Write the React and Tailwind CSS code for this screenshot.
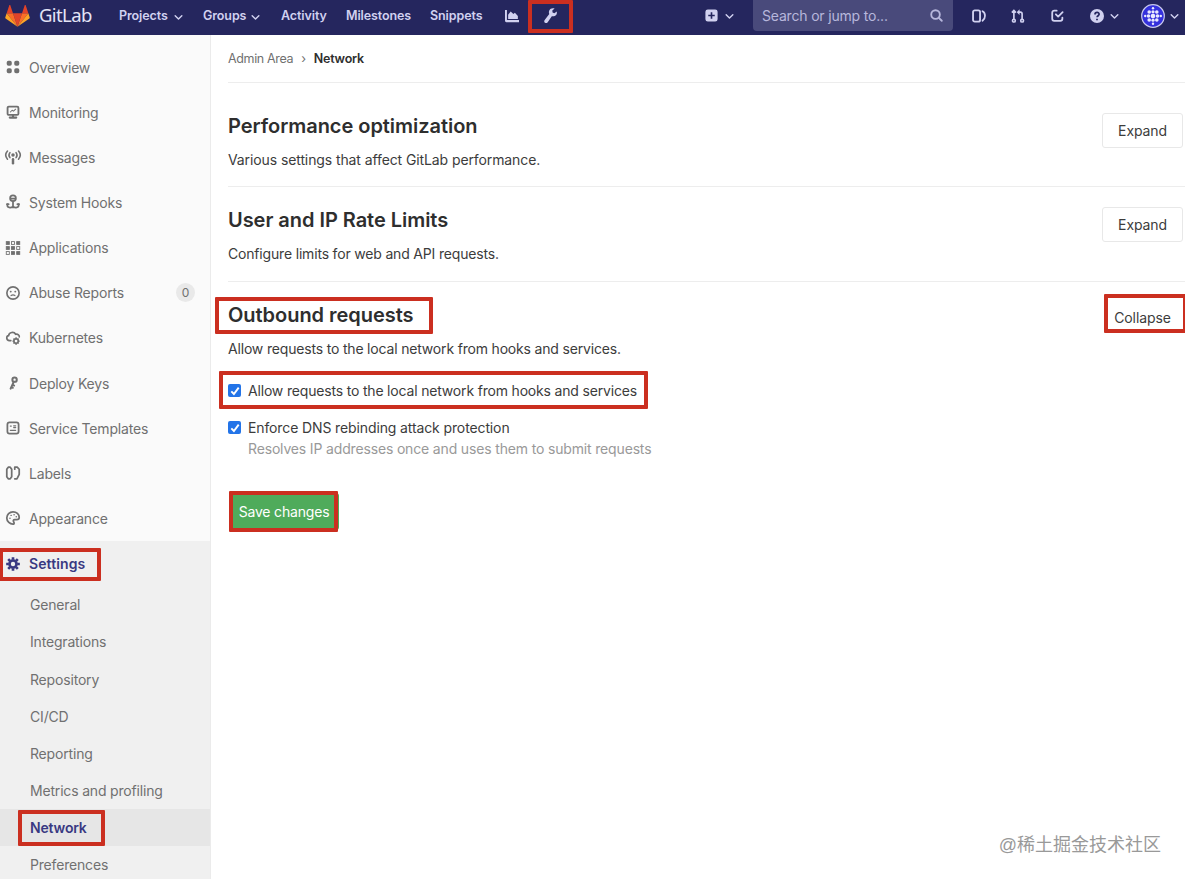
import React, { useState } from "react";
import clsx from "clsx";

const ICONS = {
    overview: (
        <g fill="none" stroke="currentColor" strokeWidth="2.8">
            <rect x="2.2" y="2.3" width="3" height="3" rx="0.6" />
            <rect x="10.8" y="2.3" width="3" height="3" rx="0.6" />
            <rect x="2.2" y="10.7" width="3" height="3" rx="0.6" />
            <rect x="10.8" y="10.7" width="3" height="3" rx="0.6" />
        </g>
    ),
    monitor: (
        <g fill="none" stroke="currentColor" strokeWidth="2.1" strokeLinecap="round" strokeLinejoin="round">
            <rect x="1.8" y="1.9" width="12.4" height="9.4" rx="1.4" />
            <path d="M4.3 14.4h7.4M8 12v2" strokeWidth="2.4" />
            <path d="M5 8l2-2 1.6 1L11 4.8" strokeWidth="1.2" />
        </g>
    ),
    messages: (
        <g fill="none" stroke="currentColor" strokeWidth="1.8" strokeLinecap="round">
            <path d="M1.7 1.2C-.8 4-.8 7.7 1.7 10.5M14.3 1.2c2.5 2.8 2.5 6.5 0 9.3M4.5 3c-1.4 1.8-1.4 3.9 0 5.700M11.500 3c1.400 1.800 1.400 3.900 0 5.700" />
            <circle cx="8" cy="5.8" r="1.1" fill="currentColor" />
            <path d="M8 10.6v4.5" strokeWidth="2.8" />
        </g>
    ),
    hook: (
        <g fill="none" stroke="currentColor" strokeWidth="2" strokeLinecap="round" strokeLinejoin="round">
            <circle cx="8" cy="3.8" r="3.3" />
            <path d="M5.5 4h5M8 7.5V14M1.5 10v1.5c0 3.7 5.5 3.7 6.5 1 1 2.7 6.5 2.7 6.5-1V10M1 10.5h2M13 10.5h2" />
        </g>
    ),
    applications: (
        <g fill="currentColor" stroke="currentColor" strokeWidth="1">
            <rect x="0.3" y="0.7" width="3.5" height="3.2" />
            <rect x="6.3" y="0.7" width="3.4" height="3.2" fill="none" />
            <rect x="12.2" y="0.7" width="3.5" height="3.2" />
            <rect x="0.3" y="6.4" width="3.5" height="3.2" />
            <rect x="6.3" y="6.4" width="3.4" height="3.2" />
            <rect x="12.2" y="6.4" width="3.5" height="3.2" fill="none" />
            <rect x="0.3" y="12.1" width="3.5" height="3.2" fill="none" />
            <rect x="6.3" y="12.1" width="3.4" height="3.2" />
            <rect x="12.2" y="12.1" width="3.5" height="3.2" />
        </g>
    ),
    abuse: (
        <g fill="none" stroke="currentColor" strokeWidth="1.9" strokeLinecap="round">
            <circle cx="8" cy="8" r="7" />
            <path d="M5.3 6.3h.2M10.5 6.3h.2" strokeWidth="2" />
            <path d="M5.8 10.9c1.3-1 3.1-1 4.4 0" strokeWidth="1.3" />
        </g>
    ),
    kubernetes: (
        <g fill="none" stroke="currentColor" strokeWidth="1.9" strokeLinecap="round">
            <path d="M5.5 11H4C-.2 10.7.2 5.5 3 5.2 3.5 1.2 9.2.5 11 3.7c2.8-.5 4.4 1.3 4.2 3" />
            <circle cx="11.5" cy="11.5" r="2.5" />
            <path d="M11.5 7.700v.8M11.5 14.500v.8M7.900 11.500h.5M14.600 11.500h.6M9 9.100l.4.400M14 9.100l-.4.400M9 13.900l.4-.4M14 13.900l-.4-.4" strokeWidth="1.5" />
        </g>
    ),
    key: (
        <g fill="none" stroke="currentColor" strokeWidth="2.3" strokeLinecap="round">
            <circle cx="9.8" cy="4.2" r="2.5" />
            <path d="M8.7 7L5.3 14.4M7.5 10l1.8.9M6.3 12.7l1.5.8" />
        </g>
    ),
    template: (
        <g fill="none" stroke="currentColor" strokeWidth="2" strokeLinecap="round">
            <rect x="1.6" y="1.6" width="12.8" height="12.8" rx="2.5" />
            <path d="M5 5.8h1M8.8 5.5h2.200M8.800 7.500h2.200M5 10.700h6" strokeWidth="1.5" />
        </g>
    ),
    labels: (
        <g fill="none" stroke="currentColor" strokeWidth="2" strokeLinecap="round" strokeLinejoin="round">
            <path d="M2.600 1.300h2.200l1.700 2.400v8.600l-1.700 2.400H2.600L.9 12.300V3.700z" />
            <path d="M10 1.300h2.800l2.300 2.400v5.800l-2.600 5.200H10M10 1.300v2.400" />
        </g>
    ),
    appearance: (
        <g fill="none" stroke="currentColor" strokeWidth="2" strokeLinecap="round">
            <path d="M8.5 15C4.5 15.3.9 12 .9 8s3.100-7.100 7.100-7.100 7.100 2.900 7.100 6.500c0 1.800-1.300 2.500-2.800 2.500H10c-1.700 0-2 1.300-1.300 2.300.8 1.100.8 2.500-.2 2.800z" />
            <path d="M4.5 8.400h.1M5.800 5h.1M9.200 4.300h.1M11.700 6.500h.1" strokeWidth="1.7" />
        </g>
    ),
    settings: (
        <g fill="none" stroke="currentColor">
            <circle cx="8" cy="8" r="4" strokeWidth="3" />
            <path d="M8 .2v3M8 12.800v3M.2 8h3M12.800 8h3M2.500 2.500l2 2M11.500 11.500l2 2M13.500 2.500l-2 2M4.500 11.500l-2 2" strokeWidth="3" />
        </g>
    ),
    chart: (
        <g fill="currentColor">
            <path d="M0 1h2.200v11.500H16V15H1.500A1.500 1.500 0 010 13.500z" />
            <path d="M3.600 11.400V6.500l2.900-3.700 3.100 3 1.700-1.500L14.700 8v3.400z" />
        </g>
    ),
    wrench: (
        <path
            fill="currentColor"
            d="M14.6 3.6l-2.500 2-1.900-.8-.3-2.200L12.400.6C10.200-.4 7.700.5 6.700 2.600c-.6 1.300-.5 2.600 0 3.800L1.800 12.800c-.8 1-.6 2.200.3 2.900.9.700 2.200.5 2.900-.5l4.400-6.500c3.700.7 6.200-2 5.200-5.100z"
        />
    ),
    plus: (
        <path
            fill="currentColor"
            fillRule="evenodd"
            d="M3.500.5h9a3 3 0 013 3v9a3 3 0 01-3 3h-9a3 3 0 01-3-3v-9a3 3 0 013-3zM7 4v3H4v2h3v3h2V9h3V7H9V4z"
        />
    ),
    search: (
        <g fill="none" stroke="currentColor" strokeWidth="2.3" strokeLinecap="round">
            <circle cx="6.8" cy="6.8" r="5.3" />
            <path d="M10.9 10.9l3.6 3.6" />
        </g>
    ),
    issues: (
        <g fill="none" stroke="currentColor" strokeWidth="2.1" strokeLinecap="round">
            <rect x="1.2" y="1.5" width="8" height="13" rx="2" />
            <path d="M12 2.500c3.800 1.800 3.800 8.200 0 11" strokeWidth="2" />
        </g>
    ),
    merge: (
        <g fill="none" stroke="currentColor" strokeWidth="1.9">
            <circle cx="3.3" cy="13.3" r="1.6" />
            <circle cx="12.7" cy="13.3" r="1.6" />
            <path d="M3.300 11.700V1.700M1 4.200l2.300-2.500 2.300 2.500M8.800 3.600h2c1.300 0 1.900.8 1.900 2v6.100" />
            <path d="M9.800.4v6.400L6.500 3.600z" fill="currentColor" stroke="none" />
        </g>
    ),
    todo: (
        <g fill="none" stroke="currentColor" strokeWidth="2.2" strokeLinecap="round" strokeLinejoin="round">
            <path d="M7 2H4a2.500 2.500 0 00-2.500 2.500V12A2.500 2.500 0 004 14.500h7.500A2.500 2.500 0 0014 12v-1.500" />
            <path d="M6 6.500l2.800 2.800L14.300 3.800" />
        </g>
    ),
    help: (
        <g>
            <circle cx="8" cy="8" r="8" fill="currentColor" />
            <path d="M5.700 6.200c.1-3 4.800-2.900 4.700-.1 0 1.500-2.300 1.600-2.300 3.200M8 11.200v1.700" fill="none" stroke="#25265e" strokeWidth="2" />
        </g>
    ),
};

const Icon = ({ name, className }) => (
    <svg viewBox="0 0 16 16" className={clsx("shrink-0 overflow-visible", className)}>
        {ICONS[name]}
    </svg>
);

const Chevron = () => (
    <svg viewBox="0 0 10 6" className="mt-0.5 h-[5px] w-[9px] shrink-0 overflow-visible">
        <path d="M1 .8l4 4 4-4" fill="none" stroke="currentColor" strokeWidth="1.7" strokeLinecap="round" strokeLinejoin="round" />
    </svg>
);

const Logo = () => (
    <svg viewBox="0 0 36 32" className="h-[22px] w-[25px] shrink-0">
        <path fill="#e24329" d="M18 31.5L24.6 12H11.4z" />
        <path fill="#fc6d26" d="M18 31.5L11.4 12H2.2zM18 31.5L24.6 12h9.2z" />
        <path fill="#fca326" d="M2.200 12L.2 18c-.2.600 0 1.200.5 1.500L18 31.500zM33.800 12l2 6c.2.600 0 1.200-.5 1.500L18 31.500z" />
        <path fill="#e24329" d="M2.200 12h9.200l-4-12c-.2-.6-1-.6-1.200 0zM33.800 12h-9.200l4-12c.2-.6 1-.6 1.200 0z" />
    </svg>
);

const Avatar = () => (
    <svg viewBox="0 0 24 24" className="size-6 shrink-0">
        <circle cx="12" cy="12" r="11.3" fill="#3430dc" stroke="#c9c9ee" strokeWidth="1.2" />
        <g fill="#e9e9ff">
            <circle cx="12" cy="12" r="2.3" />
            <circle cx="12" cy="7.8" r="1.6" />
            <circle cx="12" cy="16.2" r="1.6" />
            <circle cx="7.5" cy="12" r="1.8" />
            <circle cx="16.5" cy="12" r="1.8" />
            <circle cx="8.2" cy="8" r="1.8" />
            <circle cx="15.8" cy="8" r="1.8" />
            <circle cx="8.2" cy="16" r="1.8" />
            <circle cx="15.8" cy="16" r="1.8" />
            <circle cx="12" cy="4.2" r="1.2" />
            <circle cx="12" cy="19.8" r="1.2" />
            <circle cx="4.2" cy="12" r="1.2" />
            <circle cx="19.8" cy="12" r="1.2" />
        </g>
    </svg>
);

// Red marker drawn over the element it points out
const Marker = ({ className }) => (
    <span className={clsx("pointer-events-none absolute rounded-[1px] border-4 border-[#cb2f20]", className)} />
);

const menu = [
    { icon: "overview", label: "Overview" },
    { icon: "monitor", label: "Monitoring" },
    { icon: "messages", label: "Messages" },
    { icon: "hook", label: "System Hooks" },
    { icon: "applications", label: "Applications" },
    { icon: "abuse", label: "Abuse Reports", count: 0 },
    { icon: "kubernetes", label: "Kubernetes" },
    { icon: "key", label: "Deploy Keys" },
    { icon: "template", label: "Service Templates" },
    { icon: "labels", label: "Labels" },
    { icon: "appearance", label: "Appearance" },
];

const settingsMenu = [
    "General",
    "Integrations",
    "Repository",
    "CI/CD",
    "Reporting",
    "Metrics and profiling",
    "Network",
    "Preferences",
];

const Navbar = () => (
    <header className="flex h-[35px] shrink-0 items-start bg-[#25265e] text-[12.5px] font-semibold tracking-[-0.1px] text-[#d1d1f0]">
        <div className="flex h-[31px] w-[119px] items-center pl-[5px]">
            <Logo />
            <span className="mb-0.5 ml-[9px] font-['Noto_Sans',sans-serif] text-[18.5px] font-normal tracking-[-0.6px] text-[#e4e4f6]">GitLab</span>
        </div>
        <nav className="flex h-[32px] items-center">
            <a className="flex w-[84px] items-center"><span className="w-[55px]">Projects</span><Chevron /></a>
            <a className="flex w-[78px] items-center"><span className="w-[48px]">Groups</span><Chevron /></a>
            <a className="w-[65px]">Activity</a>
            <a className="w-[84px]">Milestones</a>
            <a className="w-[75px]">Snippets</a>
            <Icon name="chart" className="mb-px size-[14px]" />
        </nav>
        <div className="relative ml-[9px] flex h-[33px] w-[45px] items-center justify-center">
            <Icon name="wrench" className="mb-[3px] size-[15px]" />
            <Marker className="inset-0" />
        </div>
        <div className="ml-auto flex h-[31px] items-center">
            <Icon name="plus" className="mr-[7px] size-[13px]" />
            <Chevron />
            <div className="ml-[19px] flex h-[31px] w-[200px] items-center justify-between rounded-b-[4px] bg-[#494a7b] pr-[10px] pl-[9px] text-[14px] font-normal text-[#b7b7dc]">
                <span className="tracking-[-0.18px]">Search or jump to...</span>
                <Icon name="search" className="size-[13px]" />
            </div>
            <Icon name="issues" className="ml-[19px] size-[14px]" />
            <Icon name="merge" className="ml-[25px] size-[14px]" />
            <Icon name="todo" className="ml-[26px] size-[13px]" />
            <Icon name="help" className="mr-[6px] ml-[26px] size-[14px]" />
            <Chevron />
            <span className="mr-[5px] ml-[22px]"><Avatar /></span>
            <Chevron />
            <span className="w-[6px]" />
        </div>
    </header>
);

const Sidebar = () => (
    <aside className="flex w-[211px] shrink-0 flex-col border-r border-[#ebebeb] bg-[#fafafa] pt-[9.5px] text-[14px] tracking-[-0.18px] text-[#707070]">
        {menu.map((item) => (
            <a key={item.label} className="flex h-[45.15px] shrink-0 items-center pr-[15px] pl-[6px]">
                <Icon name={item.icon} className="size-[14px]" />
                <span className="ml-[9px]">{item.label}</span>
                {item.count !== undefined && (
                    <span className="ml-auto flex size-[19px] items-center justify-center rounded-full bg-[#e9e9e9] text-[12px]">{item.count}</span>
                )}
            </a>
        ))}
        <div className="grow bg-[#f0f0f0]">
            <a className="relative flex h-[45.15px] items-center pl-[6px] font-semibold tracking-[0.1px] text-[#393982]">
                <Icon name="settings" className="size-[14px]" />
                <span className="ml-[9px]">Settings</span>
                <Marker className="top-[7px] -left-px h-[33px] w-[102px]" />
            </a>
            {settingsMenu.map((label) => (
                <a
                    key={label}
                    className={clsx(
                        "relative flex h-[37.15px] items-center pl-[30px]",
                        label === "Network" && "bg-[#e6e6e6] font-semibold text-[#393982]"
                    )}
                >
                    {label}
                    {label === "Network" && <Marker className="top-px left-[18px] h-[36px] w-[87px]" />}
                </a>
            ))}
        </div>
    </aside>
);

const Checkbox = ({ checked, onChange }) => (
    <button
        onClick={onChange}
        className={clsx(
            "flex size-[13px] shrink-0 items-center justify-center rounded-[2px]",
            checked ? "bg-[#2374e8]" : "border border-gray-400 bg-white"
        )}
    >
        {checked && (
            <svg viewBox="0 0 12 12" className="size-[12px]">
                <path d="M2.3 6.4l2.6 2.6 4.8-6.4" fill="none" stroke="#fff" strokeWidth="1.9" />
            </svg>
        )}
    </button>
);

const SectionHeader = ({ title, description, expanded, marked }) => (
    <div className="flex items-start justify-between">
        <div>
            <h4 className="relative w-fit text-[20px] leading-7 font-semibold tracking-[-0.04px] text-[#2e2e2e]">
                {title}
                {marked && <Marker className="-top-[4px] -left-[13px] h-[37px] w-[218px]" />}
            </h4>
            <p className="mt-[10px] leading-5">{description}</p>
        </div>
        <button
            className={clsx(
                "relative mt-px h-[35px] w-[81px] rounded-[3px] border bg-white tracking-[-0.1px]",
                expanded ? "border-transparent pr-[4px] pb-[3px]" : "border-[#e8e8e8]"
            )}
        >
            {expanded ? "Collapse" : "Expand"}
            {marked && <Marker className="-top-[9px] -left-px h-[39px] w-[83px]" />}
        </button>
    </div>
);

export default function App() {
    const [allowLocal, setAllowLocal] = useState(true);
    const [dnsProtection, setDnsProtection] = useState(true);

    return (
        <div className="relative flex h-[879px] w-[1185px] flex-col overflow-hidden bg-white font-['Inter',sans-serif] text-[14px] tracking-[-0.18px] text-[#3c3c3c]">
            <Navbar />
            <div className="flex min-h-0 grow">
                <Sidebar />
                <main className="min-w-0 grow pl-[17px]">
                    <div className="flex h-[48px] items-center border-b border-[#ededed] pt-[2px] text-[12.5px] tracking-[-0.35px]">
                        <span className="text-[#707070]">Admin Area</span>
                        <span className="mx-[8px] text-[#707070]">›</span>
                        <span className="font-semibold tracking-[-0.2px] text-[#2e2e2e]">Network</span>
                    </div>
                    <div className="h-[104px] border-b border-[#ededed] pt-[29px] pr-[2px] tracking-[-0.1px]">
                        <SectionHeader title="Performance optimization" description="Various settings that affect GitLab performance." />
                    </div>
                    <div className="h-[94.5px] border-b border-[#ededed] pt-[19px] pr-[2px]">
                        <SectionHeader title="User and IP Rate Limits" description="Configure limits for web and API requests." />
                    </div>
                    <div className="pt-[19px]">
                        <SectionHeader
                            title="Outbound requests"
                            description="Allow requests to the local network from hooks and services."
                            expanded
                            marked
                        />
                        <label className="relative mt-[22px] flex h-5 items-center gap-[7px]">
                            <Checkbox checked={allowLocal} onChange={() => setAllowLocal(!allowLocal)} />
                            <span>Allow requests to the local network from hooks and services</span>
                            <Marker className="-top-[10px] -left-[9px] h-[38px] w-[429px]" />
                        </label>
                        <label className="mt-[17px] flex h-5 items-center gap-[7px]">
                            <Checkbox checked={dnsProtection} onChange={() => setDnsProtection(!dnsProtection)} />
                            <span className="tracking-[-0.12px]">Enforce DNS rebinding attack protection</span>
                        </label>
                        <p className="mt-px ml-5 leading-5 tracking-[-0.16px] text-[#999]">Resolves IP addresses once and uses them to submit requests</p>
                        <button className="relative mt-[34px] ml-px h-[37px] w-[110px] rounded-[3px] bg-[#4fab5b] text-white">
                            Save changes
                            <Marker className="-top-[2px] left-0 h-[41px] w-[109px]" />
                        </button>
                    </div>
                </main>
            </div>
            <div className="absolute right-[24px] bottom-[22px] font-['Liberation_Sans','Noto_Sans_CJK_SC',sans-serif] text-[18px] leading-6 tracking-normal text-[#999]">
                @稀土掘金技术社区
            </div>
        </div>
    );
}
